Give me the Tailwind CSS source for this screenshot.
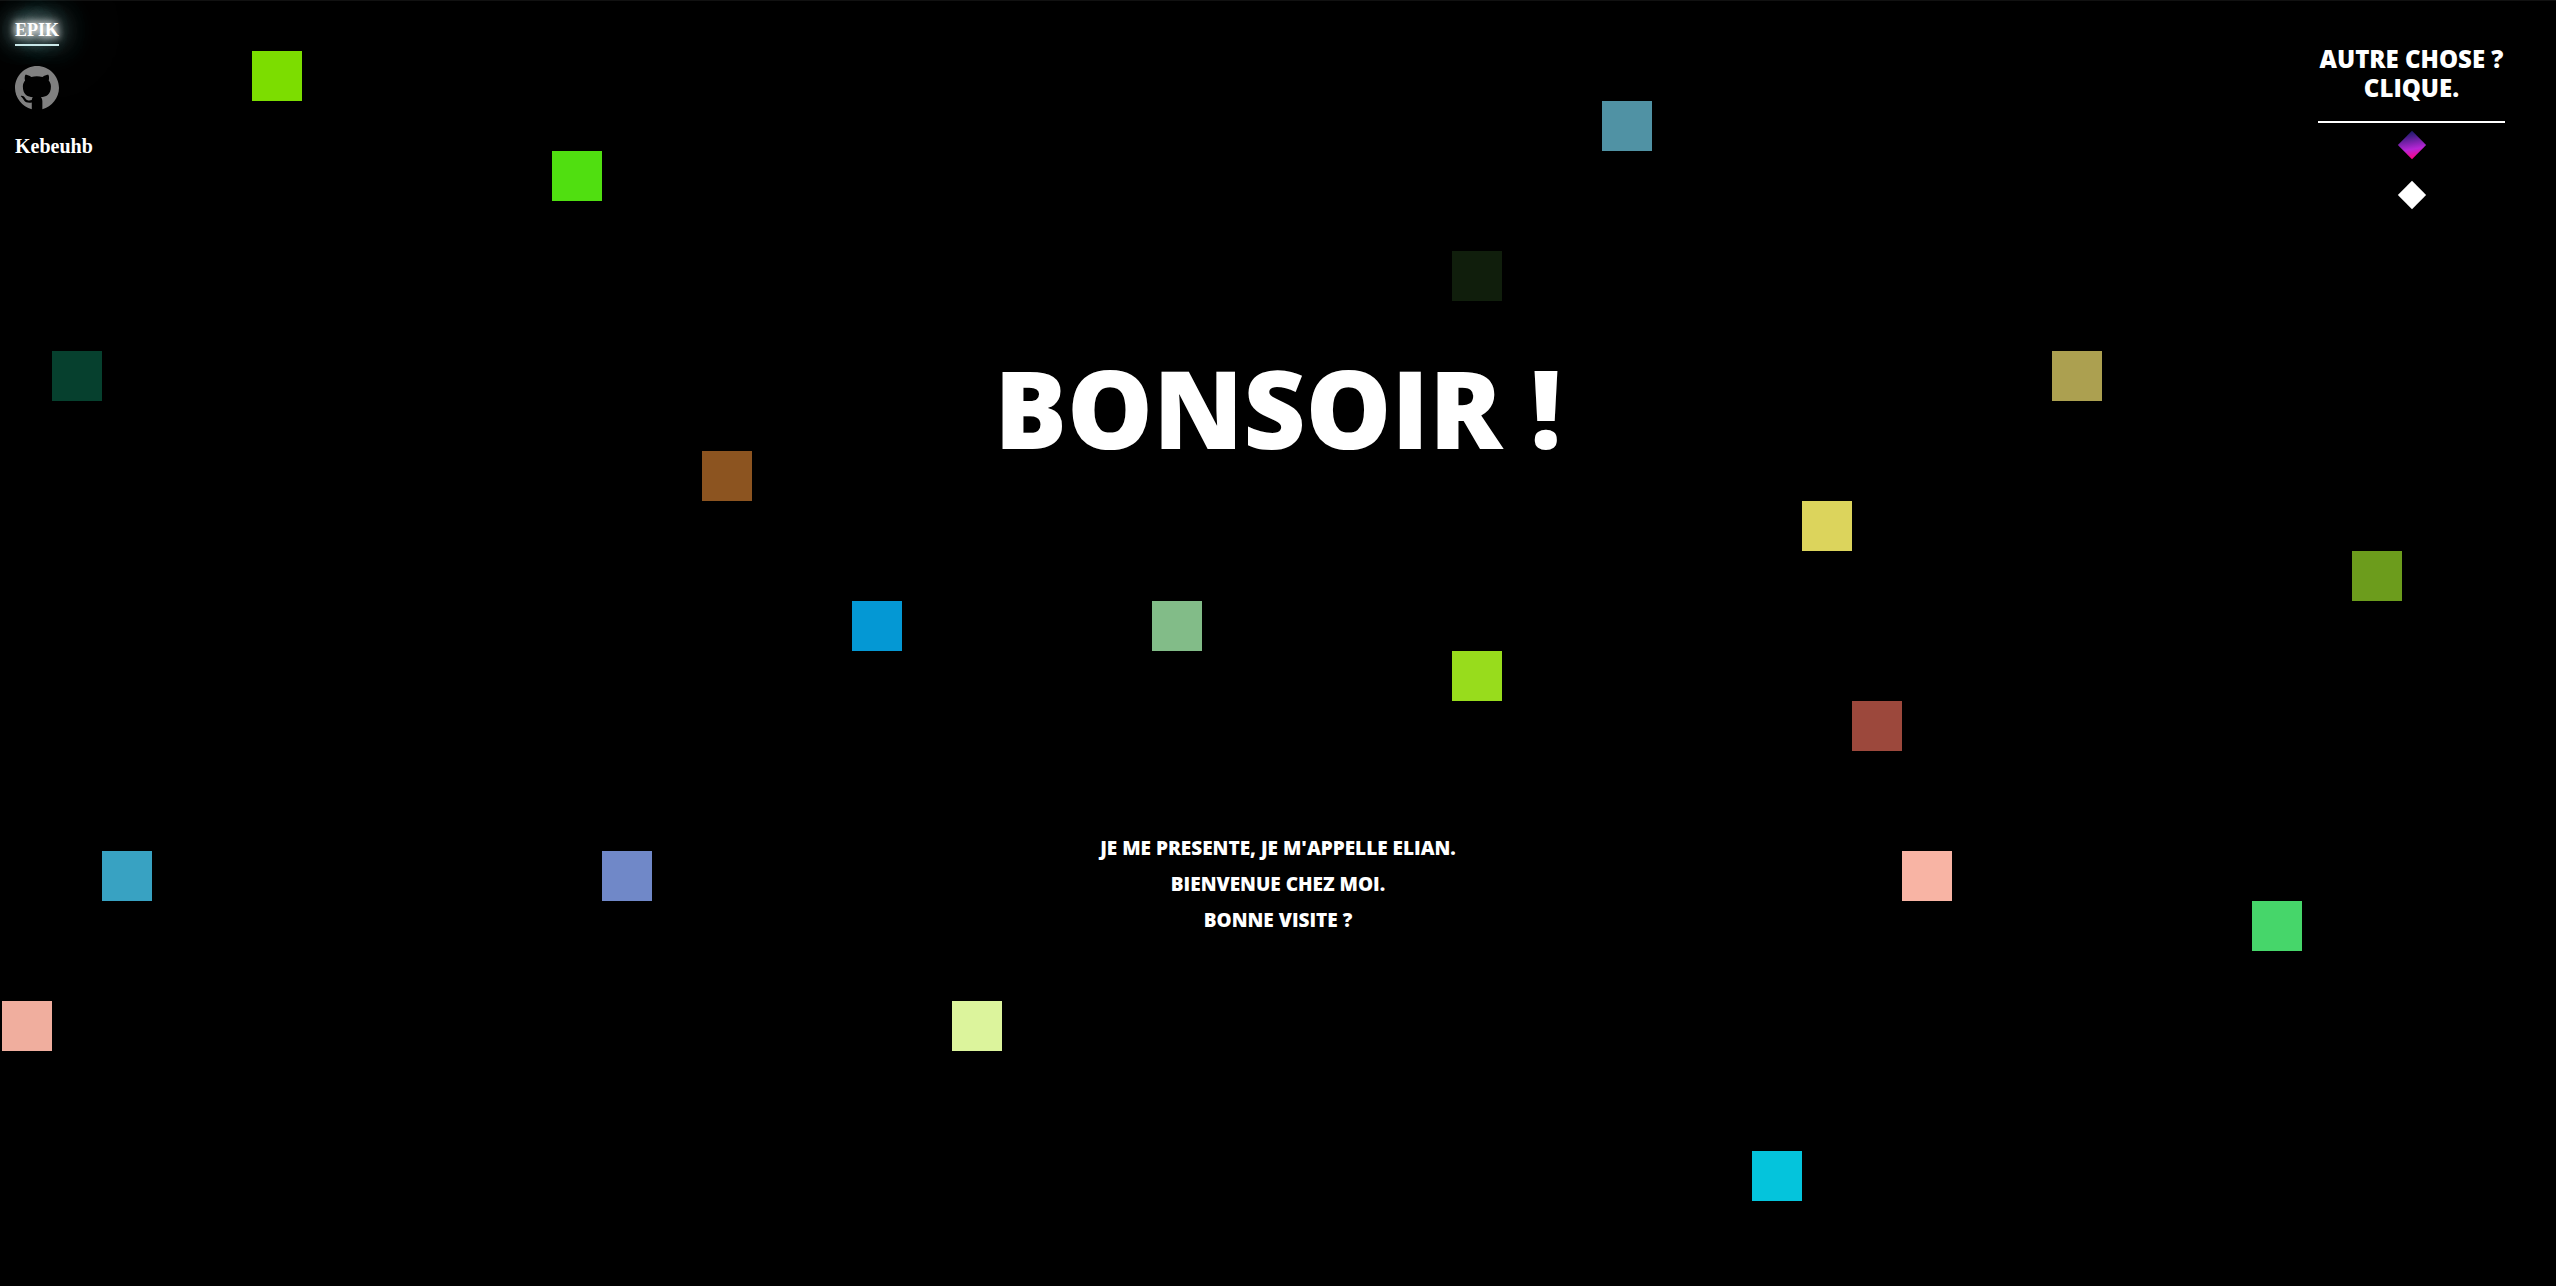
<!DOCTYPE html>
<html lang="fr">
<head>
<meta charset="utf-8">
<title>Epik</title>
<script src="https://cdn.jsdelivr.net/npm/@tailwindcss/browser@4"></script>
</head>
<body class="relative min-h-screen overflow-x-hidden bg-black text-white font-['Open_Sans','Noto_Sans',sans-serif]">
  <!-- coloured tiles on a 50px board -->
  <div id="board" aria-hidden="true" class="absolute inset-0 grid auto-rows-[50px] grid-cols-[repeat(51,50px)] overflow-hidden border-t border-[#111] pl-[2px]"></div>

  <header class="relative flex items-start justify-between">
    <nav class="flex flex-col items-start pl-[15px] pt-4 font-['Liberation_Serif',serif] font-bold">
      <a href="#" class="w-11 border-b-2 border-[#d5e8e8] text-lg leading-7 [text-shadow:0_0_7px_#fff,0_0_10px_#fff,0_0_21px_#fff,0_0_30px_#a8dce0,0_0_42px_#a8dce0,0_0_60px_#a8dce0,0_0_80px_#a8dce0,0_0_80px_#a8dce0]">EPIK</a>
      <a href="#" aria-label="GitHub" class="mt-5 block text-[#808080]">
        <svg class="h-11 w-11" viewBox="0 0 16 16" fill="currentColor"><path d="M8 0C3.58 0 0 3.58 0 8c0 3.54 2.6 6.8 6.1 7.75V13.3c-.5.1-1.5.1-2-.1-.5-.2-.8-.6-1-1-.2-.4-.5-.8-.9-1.1-.2-.1-.1-.3.2-.3.7 0 1.1.5 1.4 1 .4.7 1.3.9 2.3.6.1-.5.2-.8.4-1-1.78-.2-3.64-.89-3.64-3.95 0-.87.31-1.59.82-2.15-.08-.2-.36-1.02.08-2.12 0 0 .67-.21 2.2.82.64-.18 1.32-.27 2-.27s1.36.09 2 .27c1.53-1.04 2.2-.82 2.2-.82.44 1.1.16 1.92.08 2.12.51.56.82 1.27.82 2.15 0 3.07-1.87 3.75-3.65 3.95.29.25.54.73.54 1.48v2.87C13.4 14.8 16 11.54 16 8c0-4.42-3.58-8-8-8z"/></svg>
      </a>
      <a href="#" class="mt-6 text-xl leading-6">Kebeuhb</a>
    </nav>
    <aside class="flex flex-col items-center pr-[51px] pt-11">
      <h2 class="min-w-[187px] border-b-2 border-white pb-[19px] text-center text-2xl leading-[29px] font-extrabold whitespace-nowrap">AUTRE CHOSE ?<br>CLIQUE.</h2>
      <button aria-label="Violet" class="mt-3 h-5 w-5 rotate-45 bg-linear-[125deg] from-[#1a1a6a] via-[#b726d6] via-65% to-[#ff0080]"></button>
      <button aria-label="Blanc" class="mt-[30px] h-5 w-5 rotate-45 bg-white"></button>
    </aside>
  </header>

  <main class="relative flex flex-col items-center pt-[139px] text-center font-extrabold">
    <h1 class="text-[108px] leading-[128px]">BONSOIR !</h1>
    <p class="mt-[358px] text-[19px] leading-9">JE ME PRESENTE, JE M'APPELLE ELIAN.<br>BIENVENUE CHEZ MOI.<br>BONNE VISITE ?</p>
  </main>

  <script>
    // [column, row, colour]
    const tiles = [[5,1,'#7cdd00'],[11,3,'#50df10'],[1,7,'#06402e'],[32,2,'#5092a4'],[29,5,'#101e0c'],[14,9,'#8c5420'],[17,12,'#0498d4'],[23,12,'#82bc88'],[29,13,'#98dc1c'],[41,7,'#aca050'],[36,10,'#dcd45c'],[47,11,'#6c9c1c'],[37,14,'#9c483c'],[38,17,'#f8b4a4'],[45,18,'#46d66a'],[35,23,'#04c4dc'],[19,20,'#dcf49c'],[0,20,'#f0ae9e'],[2,17,'#38a2c2'],[12,17,'#7088c8']];
    const board = document.getElementById('board');
    for (const [c, r, color] of tiles) {
      const d = document.createElement('div');
      d.style.gridColumn = c + 1;
      d.style.gridRow = r + 1;
      d.style.background = color;
      board.append(d);
    }
  </script>
</body>
</html>
